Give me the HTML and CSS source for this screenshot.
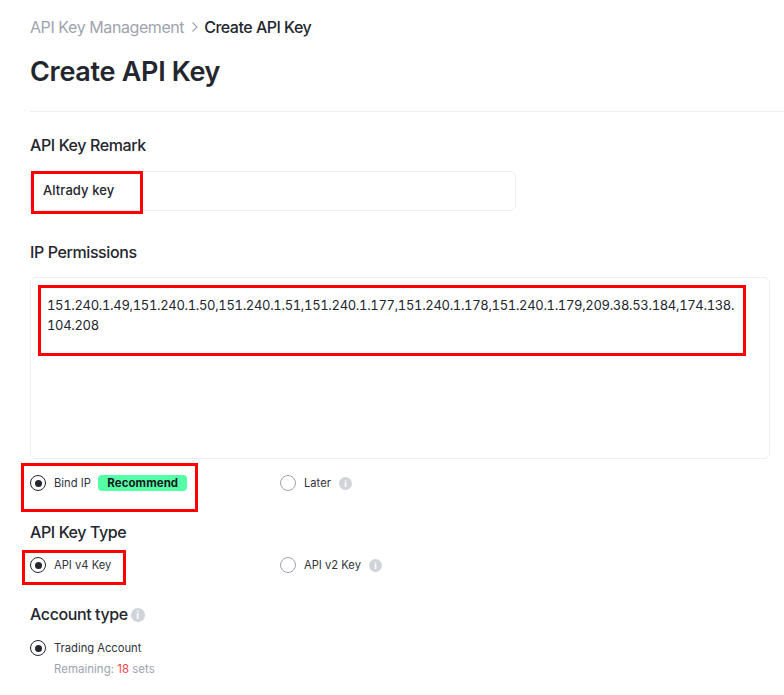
FILE: index.html
```html
<!DOCTYPE html>
<html lang="en">
<head>
<meta charset="utf-8">
<title>Create API Key</title>
<link rel="stylesheet" href="styles.css">
</head>
<body>
<main class="page">
  <nav class="crumbs">
    <span class="crumb-parent">API Key Management</span>
    <svg class="crumb-sep" width="8" height="12" viewBox="0 0 8 12"><path d="M1.5 1.5 6 6l-4.500 4.500" fill="none" stroke="#9ca3af" stroke-width="1.100"/></svg>
    <span class="crumb-current">Create API Key</span>
  </nav>
  <h1 class="title">Create API Key</h1>
  <div class="divider"></div>

  <h2 class="label label-remark">API Key Remark</h2>
  <div class="input">Altrady key</div>

  <h2 class="label label-ip">IP Permissions</h2>
  <div class="textarea">151.240.1.49,151.240.1.50,151.240.1.51,151.240.1.177,151.240.1.178,151.240.1.179,209.38.53.184,174.138.<br>104.208</div>

  <div class="radio-row row-bind">
    <label class="radio-cell"><span class="radio on"></span><span class="radio-text">Bind IP</span><span class="badge">Recommend</span></label>
    <label class="radio-cell"><span class="radio"></span><span class="radio-text">Later</span><span class="info">i</span></label>
  </div>

  <h2 class="label label-type">API Key Type</h2>
  <div class="radio-row row-type">
    <label class="radio-cell"><span class="radio on"></span><span class="radio-text">API v4 Key</span></label>
    <label class="radio-cell"><span class="radio"></span><span class="radio-text">API v2 Key</span><span class="info">i</span></label>
  </div>

  <h2 class="label label-account">Account type <span class="info info-lg">i</span></h2>
  <div class="radio-row row-account">
    <label class="radio-cell"><span class="radio on"></span><span class="radio-text">Trading Account</span></label>
  </div>
  <p class="remaining">Remaining: <span class="count">18</span> sets</p>

  <div class="mark mark-input"></div>
  <div class="mark mark-ip"></div>
  <div class="mark mark-bind"></div>
  <div class="mark mark-v4"></div>
</main>
</body>
</html>
```
FILE: styles.css
```css
* { box-sizing: border-box; }
html, body { margin: 0; padding: 0; background: #fff; }
body { font-family: Inter, "Liberation Sans", sans-serif; color: #23262e; overflow: hidden; }
.page { position: relative; width: 784px; height: 695px; padding: 17px 0 0 30px; overflow: hidden; }
.crumbs { display: flex; align-items: center; height: 20px; font-size: 16px; line-height: 20px; letter-spacing: -0.42px; }
.crumb-parent { color: #9ea3ad; }
.crumb-sep { margin: 0 5px 0 7px; }
.crumb-current { color: #23262e; font-weight: 500; letter-spacing: -0.5px; }
.title { margin: 16px 0 0; font-size: 27px; line-height: 38px; font-weight: 600; letter-spacing: -0.3px; }
.divider { height: 1px; background: #eceef1; margin-top: 20px; }
.label { margin: 0; font-size: 16px; line-height: 22px; font-weight: 500; letter-spacing: -0.4px; }
.label-remark { margin-top: 22px; }
.input { width: 486px; height: 40px; margin-top: 15px; padding-left: 12px; font-size: 13px; line-height: 37px; font-weight: 500; letter-spacing: 0.08px; border: 1px solid #eceef1; border-radius: 6px; }
.label-ip { margin-top: 30px; }
.textarea { width: 740px; height: 182px; margin-top: 14px; padding: 17px 16px; font-size: 13px; line-height: 20px; font-weight: 400; letter-spacing: -0.32px; font-variant-numeric: tabular-nums; border: 1px solid #eceef1; border-radius: 6px; white-space: nowrap; }
.radio-row { display: grid; grid-template-columns: 250px 1fr; }
.radio-cell { display: flex; align-items: center; height: 18px; }
.radio { width: 16px; height: 16px; margin-right: 8px; border: 1px solid #9ea3ad; border-radius: 50%; display: block; flex: none; position: relative; }
.radio.on { border-color: #23262e; }
.radio.on::after { content: ""; position: absolute; left: 3.500px; top: 3.500px; width: 7px; height: 7px; background: #23262e; border-radius: 50%; }
.radio-text { font-size: 11.2px; line-height: 18px; color: #30343d; }
.badge { margin-left: 7.500px; height: 16px; padding: 0 9px; background: #54ffa8; border-radius: 4px; font-size: 11.500px; line-height: 16px; font-weight: 700; letter-spacing: 0.06px; color: #17191e; }
.info { display: inline-block; width: 13px; height: 13px; margin-left: 8px; border-radius: 50%; background: #d0d4da; color: #fff; font-size: 9px; line-height: 13px; font-weight: 700; text-align: center; letter-spacing: 0; }
.info-lg { width: 14px; height: 14px; margin-left: -1px; line-height: 14px; font-size: 10px; vertical-align: 1px; }
.row-bind { margin-top: 15px; }
.label-type { margin-top: 29px; }
.row-type { margin-top: 13px; }
.label-account { margin-top: 29px; }
.row-account { margin-top: 14px; }
.remaining { margin: 4px 0 0 24px; font-size: 11.500px; line-height: 16px; color: #9ea3ad; }
.count { color: #f5434a; }
.mark { position: absolute; border: 3px solid #ff0000; }
.mark-input { left: 31px; top: 171px; width: 112px; height: 43px; }
.mark-ip { left: 38px; top: 285px; width: 708px; height: 71px; }
.mark-bind { left: 21px; top: 463px; width: 177px; height: 49px; }
.mark-v4 { left: 22px; top: 550px; width: 104px; height: 35px; }
```
